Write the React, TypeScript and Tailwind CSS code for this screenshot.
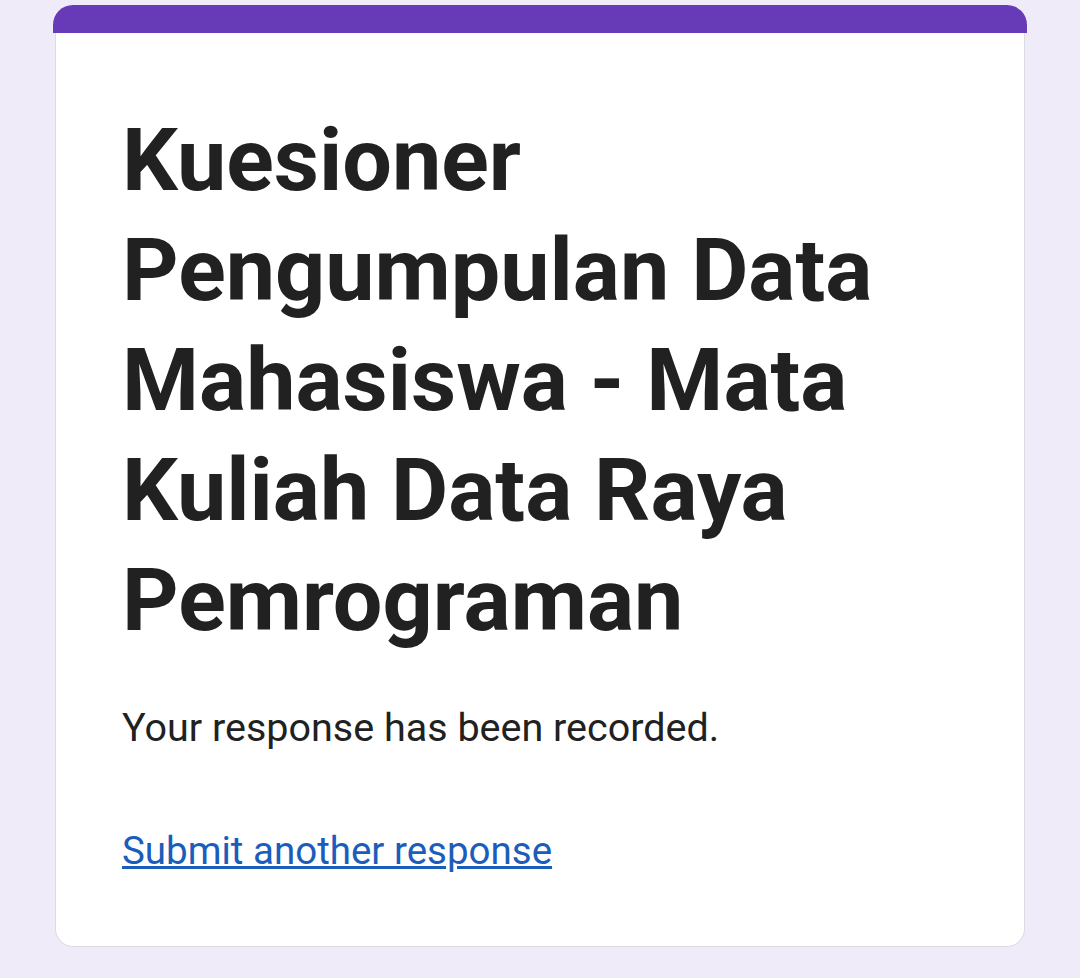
export default function App() {
  return (
    <div className="min-h-[978px] w-full bg-[#f0ebf8] pt-[5px]" style={{ fontFamily: "Roboto, 'Noto Sans', sans-serif" }}>
      <div className="ml-[53px] w-[974px]">
        <div className="h-[28px] rounded-t-[20px] bg-[#673ab7]" />
        <div className="mx-[2px] rounded-b-[18px] border border-t-0 border-[#dadce0] bg-white pl-[66px] pr-[60px] pt-[72px] pb-[70px]">
          <h1 className="text-[88px] font-bold leading-[110px] text-[#212121]">
            Kuesioner Pengumpulan Data Mahasiswa - Mata Kuliah Data Raya Pemrograman
          </h1>
          <p className="mt-[48px] text-[39.5px] leading-[50px] text-[#212121]">Your response has been recorded.</p>
          <a href="#" className="mt-[73px] block w-fit text-[38.5px] leading-[50px] text-[#1a5dba] underline">
            Submit another response
          </a>
        </div>
      </div>
    </div>
  );
}
